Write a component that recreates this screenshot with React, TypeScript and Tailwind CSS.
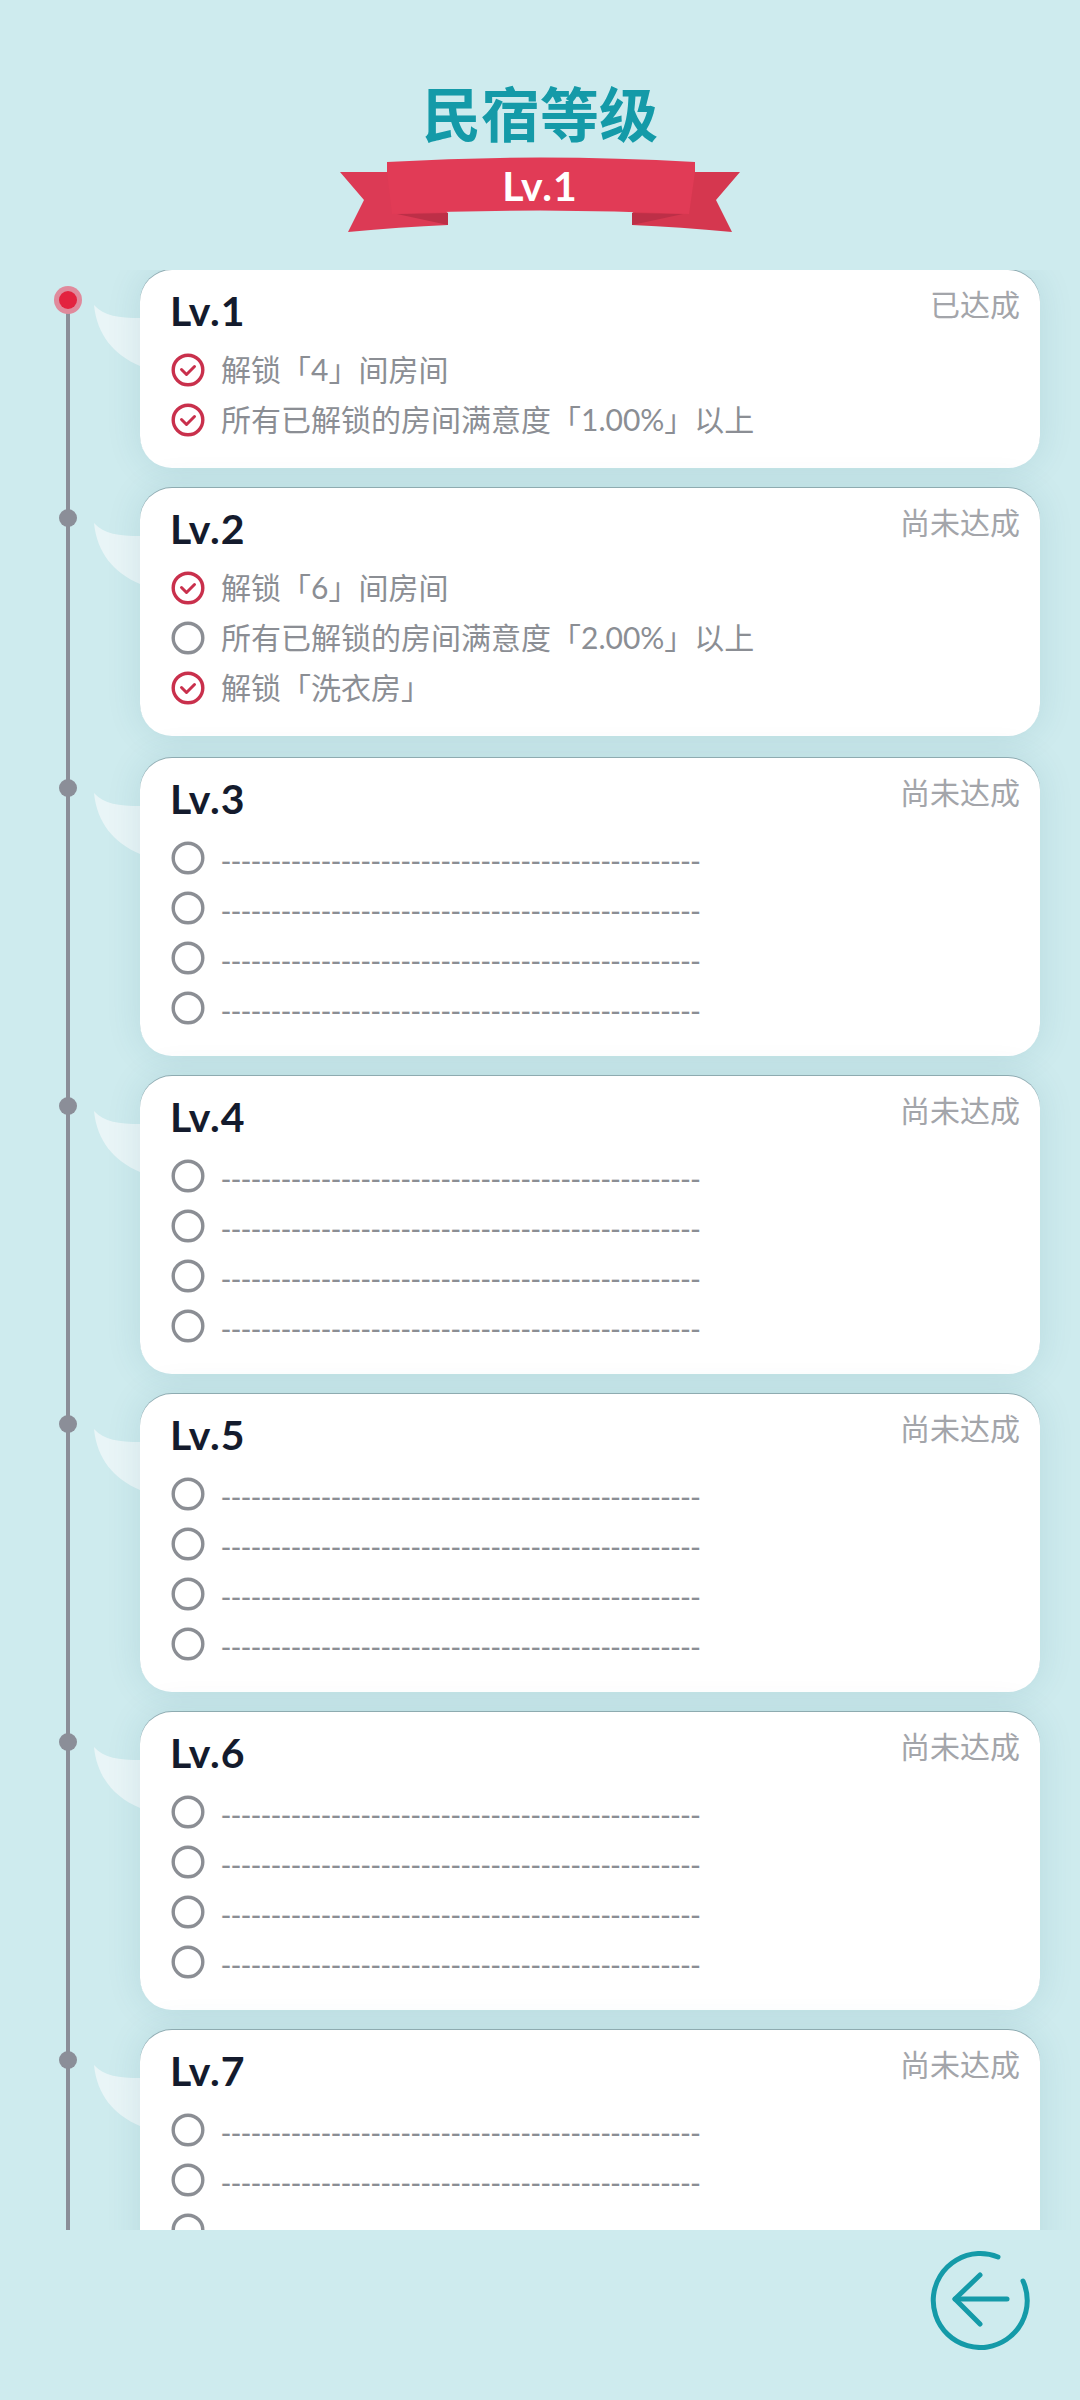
const FONT = "font-['Lato','Noto_Sans_CJK_SC',sans-serif]";

type Item = { text?: string; done: boolean };

const dashes = "-".repeat(48);
const blank: Item[] = [{ done: false }, { done: false }, { done: false }, { done: false }];

const levels: { name: string; status: string; items: Item[]; active?: boolean }[] = [
  {
    name: "Lv.1",
    status: "已达成",
    active: true,
    items: [
      { text: "解锁「4」间房间", done: true },
      { text: "所有已解锁的房间满意度「1.00%」以上", done: true },
    ],
  },
  {
    name: "Lv.2",
    status: "尚未达成",
    items: [
      { text: "解锁「6」间房间", done: true },
      { text: "所有已解锁的房间满意度「2.00%」以上", done: false },
      { text: "解锁「洗衣房」", done: true },
    ],
  },
  { name: "Lv.3", status: "尚未达成", items: blank },
  { name: "Lv.4", status: "尚未达成", items: blank },
  { name: "Lv.5", status: "尚未达成", items: blank },
  { name: "Lv.6", status: "尚未达成", items: blank },
  { name: "Lv.7", status: "尚未达成", items: blank },
];

function Check({ done }: { done: boolean }) {
  return (
    <svg width="34" height="34" viewBox="0 0 34 34" fill="none" className="shrink-0">
      <circle cx="17" cy="17" r="14.8" stroke={done ? "#c9304c" : "#8b8e94"} strokeWidth="3.4" />
      {done && (
        <path
          d="M10.5 16.5 L15.5 21.5 L23.5 13.5"
          stroke="#c9304c"
          strokeWidth="3"
          strokeLinecap="round"
          strokeLinejoin="round"
        />
      )}
    </svg>
  );
}

function Ribbon() {
  return (
    <svg width="400" height="84" viewBox="340 152 400 84" className="block">
      <path d="M340 172 L392 172 L448 213 L448 225 Q400 227 348 232 L364 200 Z" fill="#dc3a55" />
      <path d="M740 172 L688 172 L632 213 L632 225 Q680 227 732 232 L716 200 Z" fill="#d5374f" />
      <path d="M397 214 L448 213 L448 225 Z" fill="#bd2f47" />
      <path d="M683 214 L632 213 L632 225 Z" fill="#bd2f47" />
      <path d="M387 162 Q540 153 695 162 L695 172 L689 214 Q540 207 392 214 L387 172 Z" fill="#e13b56" />
    </svg>
  );
}

function LevelRow({ level, index }: { level: (typeof levels)[number]; index: number }) {
  return (
    <div className="relative flex">
      <div className="flex w-[140px] shrink-0 flex-col">
        <div className={`ml-[66px] w-1 flex-1 bg-[#8b8e98] ${index === 0 ? "mt-[30px]" : ""}`} />
      </div>
      {level.active ? (
        <div className="absolute left-[54px] top-4 flex h-7 w-7 items-center justify-center rounded-full bg-[#e08a9c]">
          <div className="h-[18px] w-[18px] rounded-full bg-[#e3233f]" />
        </div>
      ) : (
        <div className="absolute left-[59px] top-[21px] h-[18px] w-[18px] rounded-full bg-[#8b8e98]" />
      )}
      <svg width="46" height="62" viewBox="0 0 46 62" className="absolute left-[94px] top-[35px]">
        <path d="M0 0 C10 11 25 13 46 13 L46 61 C20 50 3 30 0 0 Z" fill="#e9f5f7" />
      </svg>
      <div className={index === 1 ? "pb-[22px]" : "pb-[20px]"}>
        <div className="relative w-[900px] rounded-[32px] bg-white pb-[23px] pl-[30px] pr-5 pt-[14px] shadow-[0_0_36px_rgba(0,90,110,0.11),0_-1px_0_rgba(70,90,100,0.4)]">
          <div className="flex items-start justify-between">
            <span className={`${FONT} text-[41px] font-bold leading-[54px] tracking-[1px] text-[#141b2d]`}>{level.name}</span>
            <span className={`${FONT} text-[30px] leading-[40px] text-[#a3a5aa]`}>{level.status}</span>
          </div>
          <div className="mt-[7px] flex flex-col">
            {level.items.map((item, i) => (
              <div key={i} className="flex h-[50px] items-center gap-4 pl-[1px]">
                <Check done={item.done} />
                {item.text ? (
                  <span className={`${FONT} pb-[3px] text-[30px] leading-[44px] text-[#8b8e94]`}>{item.text}</span>
                ) : (
                  <span className="pt-[6px] font-['Liberation_Sans',sans-serif] text-[30px] leading-[44px] text-[#8b8e94]">
                    {dashes}
                  </span>
                )}
              </div>
            ))}
          </div>
        </div>
      </div>
    </div>
  );
}

export default function App() {
  return (
    <div className="flex h-[2400px] w-[1080px] flex-col overflow-hidden bg-[#ceebee]">
      <header className="flex h-[270px] shrink-0 flex-col items-center pt-[78px]">
        <h1 className={`${FONT} text-[59px] font-bold leading-[74px] text-[#149aa8]`}>民宿等级</h1>
        <div className="relative">
          <Ribbon />
          <div className={`${FONT} absolute inset-x-0 top-[10px] text-center text-[41px] font-bold leading-[48px] tracking-[1px] text-white`}>
            Lv.1
          </div>
        </div>
      </header>
      <main className="h-[1960px] shrink-0 overflow-hidden">
        {levels.map((l, i) => (
          <LevelRow key={l.name} level={l} index={i} />
        ))}
      </main>
      <footer className="flex flex-1 items-start justify-end pr-[50px] pt-[20px]">
        <svg width="100" height="100" viewBox="0 0 100 100" fill="none" stroke="#149aa8" strokeWidth="5" strokeLinecap="round" strokeLinejoin="round">
          <path d="M68 7 A47 47 0 1 0 93 31" />
          <path d="M25 49 H77" />
          <path d="M50 25 L25 49 L50 74" />
        </svg>
      </footer>
    </div>
  );
}
